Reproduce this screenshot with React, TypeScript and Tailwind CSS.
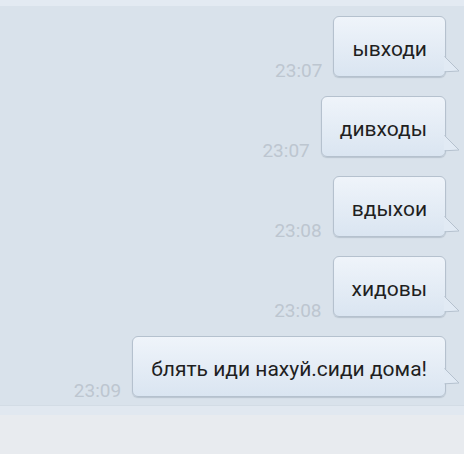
import React from "react";

type Msg = { text: string; time: string; tailClass: string };

const msgs: Msg[] = [
  { text: "ывходи", time: "23:07", tailClass: "top-[39px]" },
  { text: "дивходы", time: "23:07", tailClass: "top-[38px]" },
  { text: "вдыхои", time: "23:08", tailClass: "top-[39px]" },
  { text: "хидовы", time: "23:08", tailClass: "top-[39px]" },
  { text: "блять иди нахуй.сиди дома!", time: "23:09", tailClass: "top-[31px]" },
];

function Tail({ cls }: { cls: string }) {
  return (
    <svg
      className={`absolute left-[calc(100%-1px)] ${cls}`}
      width="16"
      height="17"
      viewBox="0 0 16 17"
    >
      <polygon points="0,0 15,15 0,15.5" fill="#e1eaf4" />
      <polyline
        points="0.5,0.5 15,15 0.5,15.8"
        fill="none"
        stroke="#b5c1ce"
        strokeWidth="1"
      />
    </svg>
  );
}

export default function App() {
  return (
    <div
      className="w-[464px] h-[454px] bg-[#d9e2eb] flex flex-col overflow-hidden"
      style={{ fontFamily: "Roboto, 'Noto Sans', sans-serif" }}
    >
      <div className="h-[6px] bg-[#e3eaf2] shrink-0" />
      <div className="flex-1 flex flex-col items-end gap-[19px] pt-[10px] pr-[18px]">
        {msgs.map((m, i) => (
          <div key={i} className="flex items-end gap-[11px]">
            <span className="text-[19px] leading-none text-[#bdc6d0] mb-[-3px]">
              {m.time}
            </span>
            <div className="relative h-[61px] px-[18px] flex items-center rounded-[6px] border border-[#b5c1ce] bg-gradient-to-b from-[#eff4fa] to-[#dae5f1] shadow-[0_1px_1px_rgba(60,80,100,0.2)]">
              <span className="text-[21px] leading-none text-[#1f1f1f] pt-[6px] whitespace-nowrap">
                {m.text}
              </span>
              <Tail cls={m.tailClass} />
            </div>
          </div>
        ))}
      </div>
      <div className="h-[49px] shrink-0 flex flex-col">
        <div className="h-[10px] bg-[#e1e8f0] border-t border-[#d3dce5]" />
        <div className="flex-1 bg-[#e8ebef]" />
      </div>
    </div>
  );
}
